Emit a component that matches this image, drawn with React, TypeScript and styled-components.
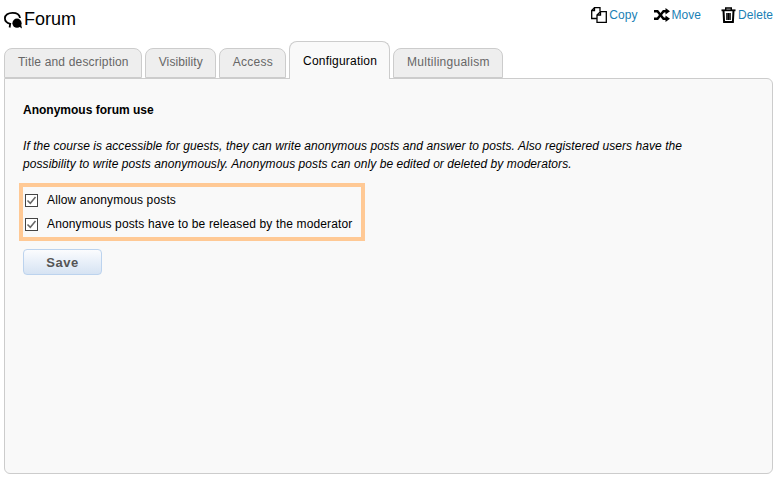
import React from "react";
import styled, { createGlobalStyle } from "styled-components";

const Global = createGlobalStyle`
  html, body { margin: 0; padding: 0; background: #fff; }
  body { font-family: "Liberation Sans", Arial, sans-serif; font-size: 12px; color: #000; }
`;

const Page = styled.div`
  width: 784px;
  height: 485px;
  padding: 0 11px 0 4px;
  box-sizing: border-box;
  display: flex;
  flex-direction: column;
`;

const Header = styled.header`
  height: 42px;
  flex: none;
  display: flex;
  justify-content: space-between;
  align-items: flex-start;
`;

const Title = styled.h1`
  margin: 9px 0 0;
  display: flex;
  align-items: center;
  gap: 1px;
  font-size: 18px;
  line-height: 21px;
  font-weight: 400;
  color: #000;
`;

const Actions = styled.nav`
  display: flex;
  gap: 17px;
  margin-top: 6px;
`;

const Action = styled.a<{ $gap?: number; $push?: number }>`
  display: flex;
  align-items: center;
  gap: ${(p) => p.$gap ?? 2}px;
  margin-left: ${(p) => p.$push ?? 0}px;
  height: 18px;
  color: #1a7fb5;
  font-size: 12px;
  letter-spacing: 0.05px;
`;

const TabBar = styled.div`
  display: flex;
  align-items: flex-end;
  gap: 3px;
  height: 37px;
  flex: none;
  margin-bottom: -1px;
  position: relative;
  z-index: 1;
`;

const Tab = styled.div<{ $active?: boolean; $spacing: number }>`
  box-sizing: border-box;
  height: ${(p) => (p.$active ? "38px" : "30px")};
  padding: ${(p) => (p.$active ? "12px 12px 0 13px" : "6px 12px 0 13px")};
  margin-bottom: ${(p) => (p.$active ? "0" : "1px")};
  border: 1px solid #ccc;
  border-bottom: ${(p) => (p.$active ? "none" : "1px solid #ccc")};
  border-radius: 8px 8px 0 0;
  background: ${(p) => (p.$active ? "#f9f9f9" : "#eee")};
  color: ${(p) => (p.$active ? "#000" : "#666")};
  font-size: 12px;
  line-height: 14px;
  letter-spacing: ${(p) => p.$spacing}px;
  white-space: nowrap;
`;

const Panel = styled.main`
  box-sizing: border-box;
  width: 769px;
  height: 396px;
  padding: 24px 18px 0;
  border: 1px solid #ccc;
  border-radius: 0 6px 6px 6px;
  background: #f9f9f9;
`;

const SectionTitle = styled.h2`
  margin: 0;
  font-size: 12px;
  line-height: 14px;
  font-weight: 700;
`;

const Description = styled.p`
  margin: 20px 0 0;
  font-size: 12px;
  line-height: 18px;
  font-style: italic;
  letter-spacing: 0.07px;
  width: 700px;
`;

const Highlight = styled.div`
  box-sizing: border-box;
  width: 346px;
  height: 58px;
  margin: 10px 0 0 -4px;
  padding: 1px 0 0 2px;
  border: 4px solid #ffc995;
  display: flex;
  flex-direction: column;
`;

const Row = styled.label`
  display: flex;
  align-items: center;
  gap: 9px;
  height: 24px;
  font-size: 12px;
  letter-spacing: 0.14px;
`;

const Box = styled.span`
  width: 13px;
  height: 13px;
  flex: none;
  box-sizing: border-box;
  border: 1px solid #444;
  background: #fff;
  display: flex;
`;

const Save = styled.button`
  display: block;
  box-sizing: border-box;
  width: 79px;
  height: 26px;
  margin-top: 8px;
  padding: 0;
  border: 1px solid #bcd3ee;
  border-radius: 4px;
  background: linear-gradient(#fbfcfe, #d6e3f3);
  color: #555;
  font-family: inherit;
  font-size: 13px;
  font-weight: 700;
  letter-spacing: 0.5px;
`;

const Check = () => (
  <svg width="11" height="11" viewBox="0 0 11 11" fill="none">
    <path d="M1.5 5.5 L4.3 8.3 L9.5 2" stroke="#666" strokeWidth="1.5" />
  </svg>
);

const ForumIcon = () => (
  <svg width="19" height="18" viewBox="0 0 19 18">
    <path d="M5.6 16.5 L6.2 12.8 C2.8 12 0.9 10 0.9 7.3 C0.9 3.9 4.4 1.8 8.5 1.8 C12.4 1.8 15.6 3.7 16 7" fill="none" stroke="#000" strokeWidth="1.8" />
    <circle cx="13" cy="12.2" r="4.6" fill="#000" />
    <path d="M15 15.5 L18 17.5 L17 13 Z" fill="#000" />
  </svg>
);

const CopyIcon = () => (
  <svg width="16" height="16" viewBox="0 0 16 16" fill="none" stroke="#000" strokeWidth="1.3">
    <path d="M6 11.5 H0.7 V3.5 L3.5 0.7 H9 V4.5" />
    <path d="M0.7 3.5 H3.5 V0.7" />
    <path d="M6 8 L9.5 4.7 H15.3 V15.3 H6 Z" fill="#fff" />
    <path d="M6 8 H9.5 V4.7" />
  </svg>
);

const MoveIcon = () => (
  <svg width="16" height="14" viewBox="0 0 16 14" fill="none" stroke="#000" strokeWidth="2.4">
    <path d="M0 3.2 H3.5 L9.5 10.8 H12" />
    <path d="M0 10.8 H3.5 L9.5 3.2 H12" />
    <path d="M11.5 0 L16 3.2 L11.5 6.4 Z" fill="#000" stroke="none" />
    <path d="M11.5 7.6 L16 10.8 L11.5 14 Z" fill="#000" stroke="none" />
  </svg>
);

const TrashIcon = () => (
  <svg width="15" height="16" viewBox="0 0 15 16" fill="none" stroke="#000">
    <path d="M0.5 3.3 H14.5" strokeWidth="1.8" />
    <path d="M4.7 3 V1 H10.3 V3" strokeWidth="1.4" />
    <path d="M2.5 3.5 L3.1 15 H11.9 L12.5 3.5" strokeWidth="2" />
    <path d="M6 6 V13 M9 6 V13" strokeWidth="1.6" />
    <path d="M7.5 6 V13" strokeWidth="1" />
  </svg>
);

const tabs = [
  { label: "Title and description", spacing: 0.18 },
  { label: "Visibility", spacing: 0.1 },
  { label: "Access", spacing: 0.25 },
  { label: "Configuration", spacing: 0.2 },
  { label: "Multilingualism", spacing: 0.27 },
];

export default function App() {
  return (
    <Page>
      <Global />
      <Header>
        <Title>
          <ForumIcon />
          Forum
        </Title>
        <Actions>
          <Action><CopyIcon />Copy</Action>
          <Action $gap={1}><MoveIcon />Move</Action>
          <Action $push={3}><TrashIcon />Delete</Action>
        </Actions>
      </Header>
      <TabBar>
        {tabs.map((t) => (
          <Tab key={t.label} $active={t.label === "Configuration"} $spacing={t.spacing}>{t.label}</Tab>
        ))}
      </TabBar>
      <Panel>
        <SectionTitle>Anonymous forum use</SectionTitle>
        <Description>
          If the course is accessible for guests, they can write anonymous posts and answer to posts. Also registered users have the possibility to write posts anonymously. Anonymous posts can only be edited or deleted by moderators.
        </Description>
        <Highlight>
          <Row><Box><Check /></Box>Allow anonymous posts</Row>
          <Row><Box><Check /></Box>Anonymous posts have to be released by the moderator</Row>
        </Highlight>
        <Save type="button">Save</Save>
      </Panel>
    </Page>
  );
}
